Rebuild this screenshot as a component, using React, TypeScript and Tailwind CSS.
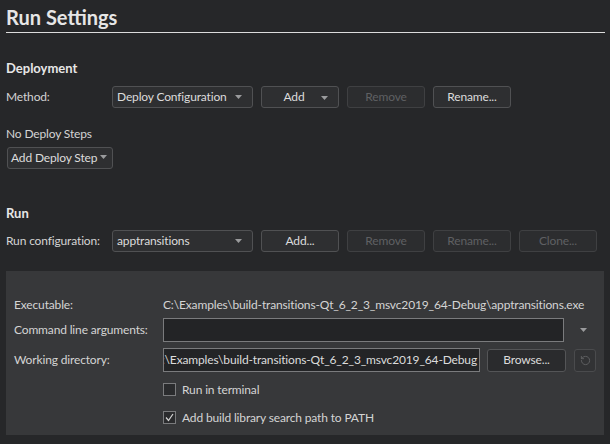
import { RotateCcw } from 'lucide-react'

const FONT = "font-['Lato','Segoe_UI','Noto_Sans',sans-serif]"

function Arrow({ className = '' }: { className?: string }) {
  return (
    <svg width="7" height="4" viewBox="0 0 7 4" className={className}>
      <path d="M0 0h7L3.5 4z" fill="#9a9b9d" />
    </svg>
  )
}

function Btn({
  label,
  disabled,
  arrow,
  width = 'w-[78px]',
}: {
  label: string
  disabled?: boolean
  arrow?: boolean
  width?: string
}) {
  return (
    <div
      className={`relative flex h-[22px] ${width} items-center justify-center rounded-[3px] border ${
        disabled
          ? 'border-[#3f4042] bg-[#2c2d2f] text-[#5f6063]'
          : 'border-[#505153] bg-[#2e2f31] text-[#dcdcdc]'
      }`}
    >
      <span className={arrow ? '-ml-[12px]' : ''}>{label}</span>
      {arrow && <Arrow className="absolute right-[10px] top-[9px]" />}
    </div>
  )
}

function Combo({ value }: { value: string }) {
  return (
    <div className="flex h-[22px] w-[141px] items-center justify-between rounded-[3px] border border-[#505153] bg-[#2e2f31] pl-[4px] pr-[10px] text-[#dcdcdc]">
      <span>{value}</span>
      <Arrow />
    </div>
  )
}

function Row({ label, children }: { label: string; children: React.ReactNode }) {
  return (
    <div className="flex items-center">
      <span className="w-[106px] shrink-0 text-[#d4d4d4]">{label}</span>
      <div className="flex gap-[8px]">{children}</div>
    </div>
  )
}

export default function App() {
  return (
    <div
      className={`h-[444px] w-[610px] overflow-hidden whitespace-nowrap bg-[#262729] text-[12px] leading-none tracking-[-0.15px] ${FONT}`}
    >
      <div className="pl-[6px] pt-[7px]">
        <h1 className="pb-[5px] text-[20px] font-bold tracking-normal text-[#e6e6e6]">Run Settings</h1>
        <div className="mr-[5px] h-px bg-[#dcdcdc]" />

        <h2 className="mt-[29px] text-[13px] font-bold tracking-normal text-[#e6e6e6]">Deployment</h2>
        <div className="mt-[11px]">
          <Row label="Method:">
            <Combo value="Deploy Configuration" />
            <Btn label="Add" arrow />
            <Btn label="Remove" disabled />
            <Btn label="Rename..." />
          </Row>
        </div>

        <p className="mt-[20px] text-[#d4d4d4]">No Deploy Steps</p>
        <div className="mt-[7px] pl-[1px]">
          <div className="relative flex h-[22px] w-[106px] items-center rounded-[3px] border border-[#505153] bg-[#2e2f31] pl-[3px] text-[#dcdcdc]">
            Add Deploy Step
            <Arrow className="absolute right-[5px] top-[7px]" />
          </div>
        </div>

        <h2 className="mt-[38px] text-[13px] font-bold tracking-normal text-[#e6e6e6]">Run</h2>
        <div className="mt-[10px]">
          <Row label="Run configuration:">
            <Combo value="apptransitions" />
            <Btn label="Add..." />
            <Btn label="Remove" disabled />
            <Btn label="Rename..." disabled />
            <Btn label="Clone..." disabled />
          </Row>
        </div>

        <div className="mt-[19px] mr-[6px] h-[164px] bg-[#37383a] pl-[8px] pt-[28px] text-[#d4d4d4]">
          <div className="flex items-center">
            <span className="w-[149px] shrink-0">Executable:</span>
            <span>C:\Examples\build-transitions-Qt_6_2_3_msvc2019_64-Debug\apptransitions.exe</span>
          </div>
          <div className="mt-[7px] flex items-center">
            <span className="w-[149px] shrink-0">Command line arguments:</span>
            <div className="h-[24px] w-[401px] shrink-0 border border-[#7a7b7d] bg-[#232426]" />
            <Arrow className="ml-[16px]" />
          </div>
          <div className="mt-[6px] flex items-center">
            <span className="w-[149px] shrink-0">Working directory:</span>
            <div className="flex h-[24px] w-[317px] shrink-0 items-center justify-end overflow-hidden border border-[#7a7b7d] bg-[#232426] pr-[2px] text-[#dcdcdc]">
              <span className="shrink-0">:\Examples\build-transitions-Qt_6_2_3_msvc2019_64-Debug</span>
            </div>
            <div className="ml-[7px] flex h-[23px] w-[79px] shrink-0 items-center justify-center rounded-[3px] border border-[#545557] bg-[#2a2b2d] text-[#dcdcdc]">
              Browse...
            </div>
            <div className="ml-[8px] flex h-[23px] w-[22px] shrink-0 items-center justify-center rounded-[3px] border border-[#4a4b4d] bg-[#323335]">
              <RotateCcw size={11} color="#606164" strokeWidth={2} />
            </div>
          </div>
          <div className="mt-[11px] flex items-center pl-[149px]">
            <div className="h-[13px] w-[13px] border border-[#7a7b7d] bg-[#2a2b2d]" />
            <span className="ml-[6px]">Run in terminal</span>
          </div>
          <div className="mt-[15px] flex items-center pl-[149px]">
            <div className="flex h-[13px] w-[13px] items-center justify-center border border-[#7a7b7d] bg-[#2a2b2d]">
              <svg width="9" height="9" viewBox="0 0 9 9">
                <path d="M1 4.5l2.5 3L8 1" fill="none" stroke="#d4d4d4" strokeWidth="1.2" />
              </svg>
            </div>
            <span className="ml-[6px]">Add build library search path to PATH</span>
          </div>
        </div>
      </div>
    </div>
  )
}
